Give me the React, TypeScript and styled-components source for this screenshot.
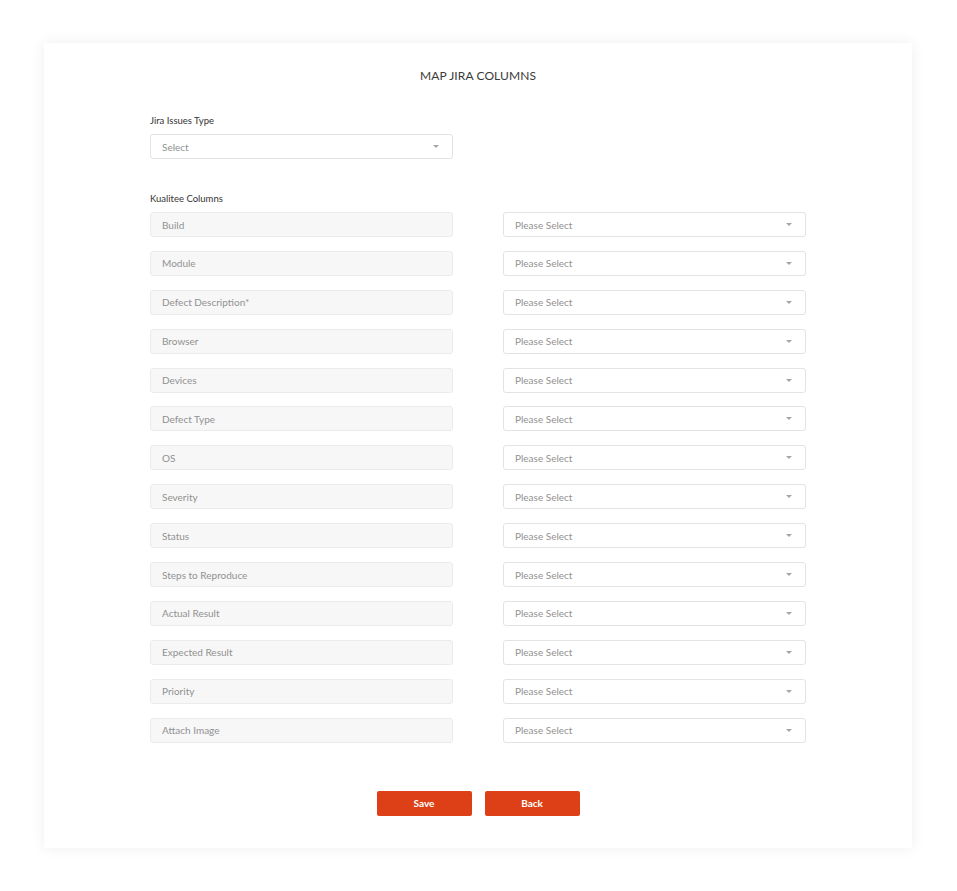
import { Fragment } from 'react';
import styled, { createGlobalStyle } from 'styled-components';

const GlobalStyle = createGlobalStyle`
  body {
    margin: 0;
    background: #fff;
    font-family: Lato, 'Open Sans', sans-serif;
  }
`;

const Page = styled.div`
  padding: 43px 45px 43px 44px;
`;

const Card = styled.section`
  width: 868px;
  height: 805px;
  box-sizing: border-box;
  background: #fff;
  box-shadow: 0 0 14px rgba(0, 0, 0, 0.07);
  padding: 26px 106px 0;
  display: flex;
  flex-direction: column;
`;

const Title = styled.h2`
  margin: 0;
  font-size: 12px;
  line-height: 14px;
  font-weight: 400;
  color: #3a3a3a;
  text-align: center;
  letter-spacing: 0.1px;
`;

const Label = styled.div<{ top: number }>`
  margin-top: ${(p) => p.top}px;
  font-size: 9.5px;
  line-height: 12px;
  color: #333;
  margin-bottom: 7px;
`;

const Field = styled.div<{ filled?: boolean }>`
  width: 303px;
  height: 25px;
  box-sizing: border-box;
  border: 1px solid ${(p) => (p.filled ? '#ebebeb' : '#e3e3e3')};
  border-radius: 3px;
  background: ${(p) => (p.filled ? '#f7f7f7' : '#fff')};
  display: flex;
  align-items: center;
  justify-content: space-between;
  padding: 0 12px 0 11px;
  font-size: 10px;
  color: #919191;
`;

const Caret = styled.span`
  width: 0;
  height: 0;
  border-left: 3px solid transparent;
  border-right: 3px solid transparent;
  border-top: 3px solid #a5a5a5;
  margin-right: 1px;
`;

const Grid = styled.div`
  display: grid;
  grid-template-columns: 303px 303px;
  column-gap: 50px;
  row-gap: 13.9px;
`;

const Actions = styled.div`
  display: flex;
  justify-content: center;
  gap: 13px;
  margin-top: 48px;
`;

const Button = styled.button`
  width: 95px;
  height: 25px;
  border: 0;
  border-radius: 2px;
  background: #dd4016;
  color: #fff;
  font-family: Lato, 'Open Sans', sans-serif;
  font-weight: 700;
  font-size: 10px;
  cursor: pointer;
`;

const columns = [
  'Build',
  'Module',
  'Defect Description*',
  'Browser',
  'Devices',
  'Defect Type',
  'OS',
  'Severity',
  'Status',
  'Steps to Reproduce',
  'Actual Result',
  'Expected Result',
  'Priority',
  'Attach Image',
];

function App() {
  return (
    <Page>
      <GlobalStyle />
      <Card>
        <Title>MAP JIRA COLUMNS</Title>
        <Label top={32}>Jira Issues Type</Label>
        <Field>
          <span>Select</span>
          <Caret />
        </Field>
        <Label top={34}>Kualitee Columns</Label>
        <Grid>
          {columns.map((c) => (
            <Fragment key={c}>
              <Field filled>
                <span>{c}</span>
              </Field>
              <Field>
                <span>Please Select</span>
                <Caret />
              </Field>
            </Fragment>
          ))}
        </Grid>
        <Actions>
          <Button>Save</Button>
          <Button>Back</Button>
        </Actions>
      </Card>
    </Page>
  );
}

export default App;
